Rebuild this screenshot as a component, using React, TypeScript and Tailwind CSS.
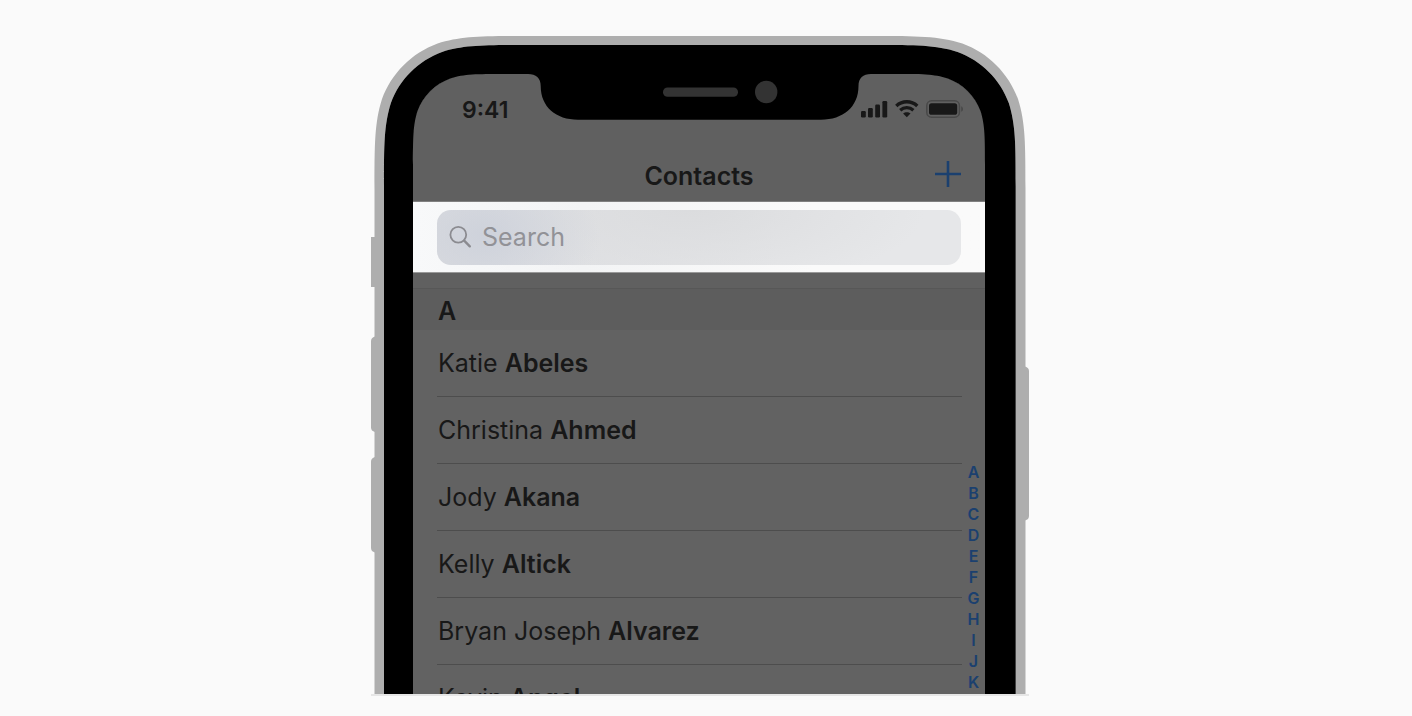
type Contact = {
  first: string;
  last: string;
};

const contacts: Contact[] = [
  { first: "Katie", last: "Abeles" },
  { first: "Christina", last: "Ahmed" },
  { first: "Jody", last: "Akana" },
  { first: "Kelly", last: "Altick" },
  { first: "Bryan Joseph", last: "Alvarez" },
  { first: "Kevin", last: "Angel" },
];

const indexLetters = ["A", "B", "C", "D", "E", "F", "G", "H", "I", "J", "K"];

// Open-bottomed panel with continuous (squircle) top corners.
function panelPath(left: number, right: number, top: number, r: number) {
  const l = (n: number) => left + n * r;
  const rt = (n: number) => right - n * r;
  const y = (n: number) => top + n * r;

  return [
    `M${left} 658`,
    `L${left} ${y(1.529)}`,
    `C${left} ${y(1.088)} ${left} ${y(0.868)} ${l(0.075)} ${y(0.631)}`,
    `C${l(0.169)} ${y(0.373)} ${l(0.373)} ${y(0.169)} ${l(0.631)} ${y(0.075)}`,
    `C${l(0.868)} ${top} ${l(1.088)} ${top} ${l(1.529)} ${top}`,
    `L${rt(1.529)} ${top}`,
    `C${rt(1.088)} ${top} ${rt(0.868)} ${top} ${rt(0.631)} ${y(0.075)}`,
    `C${rt(0.373)} ${y(0.169)} ${rt(0.169)} ${y(0.373)} ${rt(0.075)} ${y(0.631)}`,
    `C${right} ${y(0.868)} ${right} ${y(1.088)} ${right} ${y(1.529)}`,
    `L${right} 658Z`,
  ].join("");
}

const bodyPath = panelPath(3.5, 654.5, 0, 100);
const bezelPath = panelPath(13, 644.7, 9, 92);
const screenPath = panelPath(42, 614, 38, 59);

function DeviceFrame() {
  return (
    <svg
      viewBox="0 0 658 658"
      className="pointer-events-none absolute inset-0 h-full w-full"
      aria-hidden="true"
    >
      <g fill="#aeaeae">
        <path d="M0 201h6v50H0z" />
        <path d="M6 300.500H4Q0 301.500 0 305v86.500Q0 395 4 396h2z" />
        <path d="M6 421H4Q0 422 0 425.500V512Q0 515.500 4 516.500h2z" />
        <path d="M652 330.500h2Q658 331.500 658 335v145Q658 483.500 654 484.500h-2z" />
        <path fillRule="evenodd" d={bodyPath + bezelPath} />
      </g>
      <path fillRule="evenodd" d={bezelPath + screenPath} />
      <path d="M157 36V38C165 38 169.700 42 169.700 50C169.700 71 185 83.700 207 83.700H450C472 83.700 487.500 71 487.500 50C487.500 42 492 38 500 38V36Z" />
      <rect x="292" y="51.500" width="75" height="9.300" rx="4.600" fill="#333" />
      <circle cx="395.200" cy="56" r="11.200" fill="#333" />
    </svg>
  );
}

function SignalIcon() {
  return (
    <svg width="27" height="18" viewBox="0 0 27 18" fill="#181818" aria-hidden="true">
      <rect x="0" y="11" width="4.800" height="6.500" rx="1.200" />
      <rect x="7" y="8" width="4.800" height="9.500" rx="1.200" />
      <rect x="14.200" y="4.500" width="4.800" height="13" rx="1.200" />
      <rect x="21.400" y="1" width="4.800" height="16.500" rx="1.200" />
    </svg>
  );
}

function WifiIcon() {
  return (
    <svg width="24" height="18" viewBox="0 0 24 18" fill="none" stroke="#181818" aria-hidden="true">
      <path d="M1.300 6C7.300 0.400 16.300 0.400 22.300 6" strokeWidth="3.400" />
      <path d="M5.200 10.200C9 6.800 14.600 6.800 18.400 10.200" strokeWidth="3.300" />
      <path d="M11.800 17.300l-3.700-3.700c2-1.800 5.400-1.800 7.400 0z" fill="#181818" stroke="none" />
    </svg>
  );
}

function BatteryIcon() {
  return (
    <svg width="38" height="18" viewBox="0 0 38 18" fill="none" aria-hidden="true">
      <rect x="0.800" y="0.800" width="32.600" height="16.400" rx="4.800" stroke="#484848" strokeWidth="1.500" />
      <rect x="3" y="3.200" width="28.200" height="11.600" rx="2.600" fill="#181818" />
      <path d="M35.200 6.200c2.400 1 2.400 4.600 0 5.600z" fill="#484848" />
    </svg>
  );
}

function StatusBar() {
  return (
    <div className="flex h-[70px] items-center justify-between pr-[21px] pl-[49px]">
      <span className="pt-0.5 text-[23px] leading-7 font-semibold">9:41</span>
      <div className="flex items-center gap-[7px]">
        <SignalIcon />
        <WifiIcon />
        <BatteryIcon />
      </div>
    </div>
  );
}

function NavBar() {
  return (
    <header className="grid h-[57px] grid-cols-3 items-center px-6 pt-[3px]">
      <h1 className="col-start-2 pt-1 text-center text-[25px] leading-8 font-semibold">
        Contacts
      </h1>
      <button type="button" aria-label="Add contact" className="justify-self-end">
        <svg width="26" height="26" viewBox="0 0 26 26" stroke="#1b406f" strokeWidth="2.600">
          <path d="M13 0v26M0 13h26" />
        </svg>
      </button>
    </header>
  );
}

function SearchStrip() {
  return (
    <div className="border-t border-b border-t-[#808080] border-b-[#999999] bg-linear-to-r from-[#f8f9fa] via-[#f3f4f5] via-30% to-[#fafafa] to-70% px-6 pt-2 pb-[7px]">
      <label className="flex h-[55px] items-center gap-[9px] rounded-[14px] bg-[#e6e7e9] bg-[radial-gradient(ellipse_22%_150%_at_9%_45%,#ced2db_0%,#ced2db00_100%),radial-gradient(ellipse_45%_150%_at_48%_0%,#dbdcde_0%,#dbdcde00_100%),linear-gradient(90deg,#dcdde0_0%,#e6e7e9_65%)] pb-0.5 pl-3">
        <svg
          width="24"
          height="24"
          viewBox="0 0 24 24"
          fill="none"
          stroke="#8b8b90"
          strokeLinecap="round"
          aria-hidden="true"
        >
          <circle cx="9.300" cy="9.800" r="7.900" strokeWidth="1.800" />
          <path d="M15.200 15.700l5.600 5.600" strokeWidth="2.400" />
        </svg>
        <input
          type="search"
          aria-label="Search"
          placeholder="Search"
          className="min-w-0 flex-1 bg-transparent text-[25px] leading-8 text-[#1c1c1e] outline-none placeholder:text-[#929297]"
        />
      </label>
    </div>
  );
}

function ContactList() {
  return (
    <section>
      <h2 className="mt-[15px] flex h-[42px] items-center border-t border-[#575757] bg-[#5d5d5d] pt-0.5 pl-[25px] text-[25px] leading-8 font-semibold">
        A
      </h2>

      <div className="flex bg-[#626262]">
        <ul className="min-w-0 flex-1 pl-6">
          {contacts.map((contact) => (
            <li
              key={contact.last}
              className="flex h-[67px] items-center border-b border-[#4d4d4d] pl-px text-[25px] leading-8 last:h-[29px] last:items-start last:overflow-hidden last:border-0 last:pt-[17px]"
            >
              <span className="whitespace-nowrap">
                {contact.first} <b className="font-semibold">{contact.last}</b>
              </span>
            </li>
          ))}
        </ul>

        <nav aria-label="Index" className="flex w-[23px] flex-col justify-end pb-px text-center">
          {indexLetters.map((letter) => (
            <a
              key={letter}
              href={`#${letter}`}
              className="text-[16px] leading-[21px] font-semibold text-[#1b406f]"
            >
              {letter}
            </a>
          ))}
        </nav>
      </div>
    </section>
  );
}

export default function App() {
  return (
    <main className="flex min-h-screen items-start justify-center bg-[#fafafa] pt-9 pr-3 font-['Inter',sans-serif] text-[#181818]">
      <div className="w-full max-w-[658px] border-b-2 border-[#e6e6e6]">
        <div className="relative pt-[38px] pr-11 pl-[42px]">
          {/* the frame lies over the screen so that it can round off its corners */}
          <div className="rounded-t-[58px] bg-[#606060]">
            <StatusBar />
            <NavBar />
            <SearchStrip />
            <ContactList />
          </div>
          <DeviceFrame />
        </div>
      </div>
    </main>
  );
}
